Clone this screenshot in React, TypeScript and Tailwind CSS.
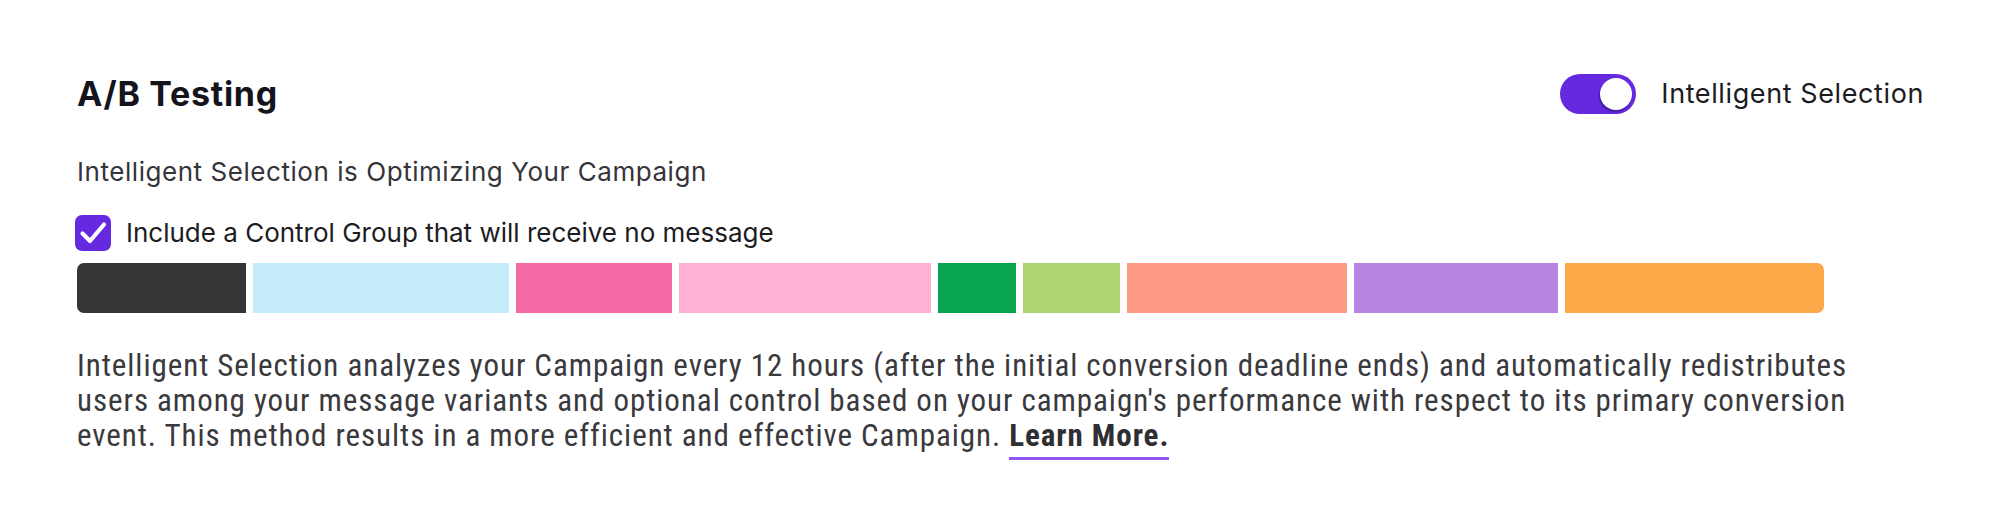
const segments = [
  { w: "w-[169px]", c: "bg-[#353537] rounded-l-[7px]" },
  { w: "w-[256px]", c: "bg-[#c3ebfa]" },
  { w: "w-[156px]", c: "bg-[#f36aa5]" },
  { w: "w-[252px]", c: "bg-[#feb1d4]" },
  { w: "w-[78px]", c: "bg-[#07a550]" },
  { w: "w-[97px]", c: "bg-[#aed574]" },
  { w: "w-[220px]", c: "bg-[#fe9b88]" },
  { w: "w-[204px]", c: "bg-[#b883e3]" },
  { w: "w-[259px]", c: "bg-[#fda949] rounded-r-[7px]" },
];

export default function App() {
  return (
    <div className="w-[2004px] h-[526px] bg-white pl-[77px] pr-[80px] pt-[74px] font-['Inter',sans-serif]">
      {/* Header */}
      <div className="flex items-center justify-between h-[40px]">
        <h2 className="text-[34px] leading-[40px] tracking-[0.7px] font-bold text-[#15141d]">A/B Testing</h2>
        <div className="flex items-center gap-[25px]">
          <button className="relative w-[76px] h-[40px] rounded-full bg-[#6529e0]">
            <span className="absolute right-[4px] top-[4px] w-[32px] h-[32px] rounded-full bg-white shadow-[-1px_2px_2px_rgba(40,20,110,0.6)]" />
          </button>
          <span className="text-[27px] leading-[32px] tracking-[0.6px] text-[#1c1b22]">Intelligent Selection</span>
        </div>
      </div>

      <p className="mt-[42px] text-[26px] leading-[32px] tracking-[0.55px] text-[#35343a]">
        Intelligent Selection is Optimizing Your Campaign
      </p>

      {/* Control group */}
      <label className="mt-[27px] flex items-center gap-[15px] h-[36px]">
        <span className="-ml-[2px] w-[36px] h-[36px] rounded-[7px] bg-[#6529e0] flex items-center justify-center">
          <svg viewBox="0 0 36 36" className="w-[36px] h-[36px]" fill="none">
            <path d="M7.5 18.5 L15 26 L29 9.5" stroke="white" strokeWidth="4.2" strokeLinecap="round" strokeLinejoin="round" />
          </svg>
        </span>
        <span className="text-[26px] leading-[32px] text-[#1d1c22]">
          Include a Control Group that will receive no message
        </span>
      </label>

      {/* Distribution bar */}
      <div className="mt-[12px] flex gap-[7px] h-[50px]">
        {segments.map((s, i) => (
          <div key={i} className={`${s.w} ${s.c} h-full`} />
        ))}
      </div>

      <p className="mt-[35px] whitespace-nowrap text-[31px] leading-[35px] tracking-[0.95px] text-[#3a393e] font-['Liberation_Sans_Narrow','Roboto_Condensed',Roboto,sans-serif]">
        Intelligent Selection analyzes your Campaign every 12 hours (after the initial conversion deadline ends) and automatically redistributes
        <br />
        users among your message variants and optional control based on your campaign's performance with respect to its primary conversion
        <br />
        event. This method results in a more efficient and effective Campaign.{" "}
        <a className="font-bold text-[#2f2e33] border-b-[3px] border-[#8f58f2] pb-[3px]">Learn More.</a>
      </p>
    </div>
  );
}
